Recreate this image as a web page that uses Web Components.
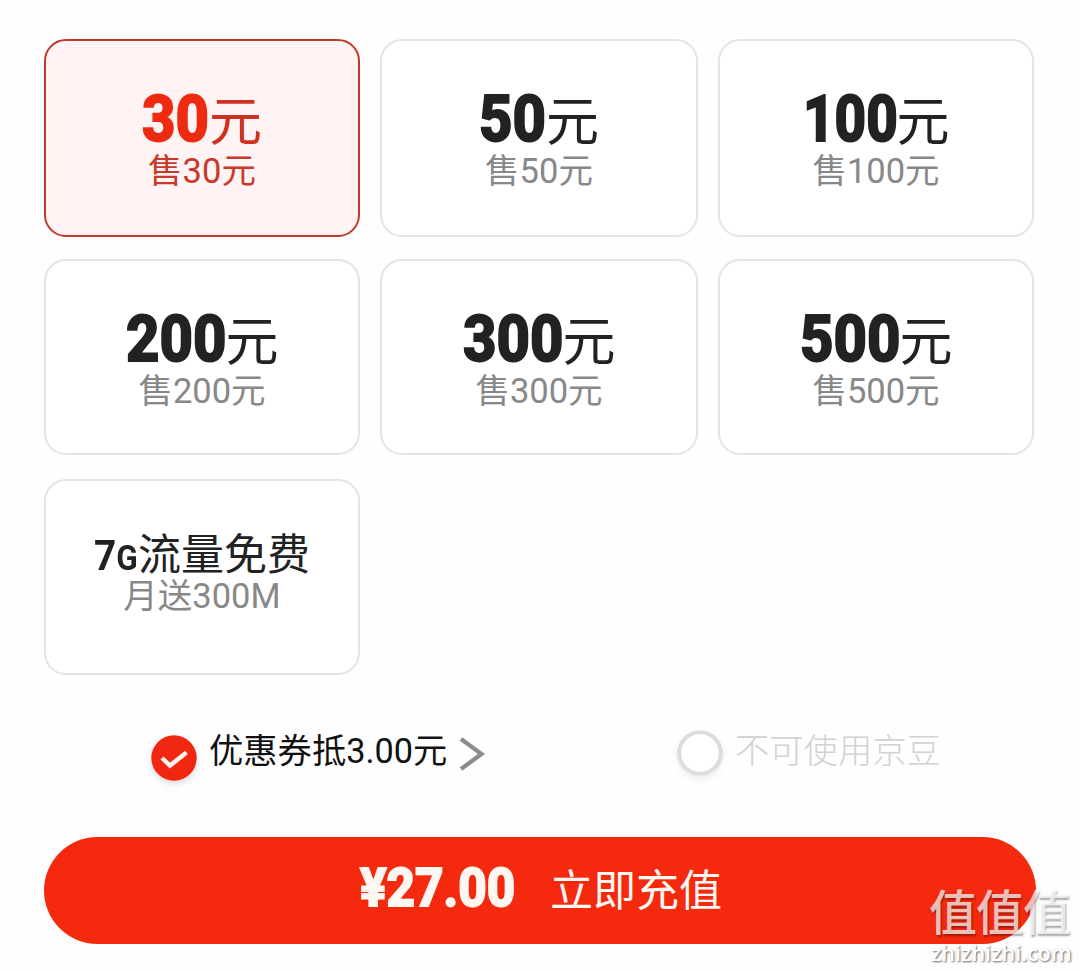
<!DOCTYPE html>
<html lang="zh-CN">
<head>
<meta charset="utf-8">
<title>话费充值</title>
<style>
  body {
    margin: 0;
    background: #fefefe;
    font-family: Roboto, "Noto Sans CJK SC", sans-serif;
  }
</style>
</head>
<body>
<recharge-page></recharge-page>

<script>
/**
 * @class SquashedNumber
 * bold digits drawn narrower than the font has them
 */
class SquashedNumber extends HTMLElement {
  /**
   * @function connectedCallback
   * @returns {void}
   */
  connectedCallback () {
    const root = this.attachShadow({ mode: 'open' });
    root.innerHTML = `
      <style>
        :host { display: inline-block; width: var(--number-width); white-space: nowrap; }
        span {
          display: inline-block;
          transform: scaleX(var(--squash, 0.9));
          transform-origin: 0 50%;
          font-weight: var(--number-weight, 800);
          -webkit-text-stroke: var(--number-stroke, 1.8px) currentColor;
        }
      </style>
      <span><slot></slot></span>`;
    this.style.setProperty('--number-width', this.getAttribute('width') + 'px');
  }
}
customElements.define('squashed-number', SquashedNumber);

/**
 * @class AmountCard
 */
class AmountCard extends HTMLElement {
  /**
   * @function connectedCallback
   * @returns {void}
   */
  connectedCallback () {
    const root = this.attachShadow({ mode: 'open' });
    root.innerHTML = `
      <style>
        :host {
          box-sizing: border-box;
          display: flex;
          flex-direction: column;
          align-items: center;
          height: 196px;
          padding-top: 44px;
          border: 2px solid #e4e4e8;
          border-radius: 22px;
          background: #fff;
          color: #222;
        }
        :host([selected]) {
          height: 198px;
          border-color: #c0392b;
          background: #fff4f3;
          color: #d03020;
          --number-color: #ee2a10;
          --sale-color: #c8392b;
        }
        :host([tall]) { height: 198px; }
        .title {
          display: flex;
          align-items: baseline;
          height: 66px;
          line-height: 68px;
          font-size: 53px;
          white-space: nowrap;
        }
        ::slotted(squashed-number) { font-size: 64.5px; color: var(--number-color, #222); }
        .sale {
          height: 40px;
          line-height: 40px;
          font-size: 34.5px;
          color: var(--sale-color, #888);
          white-space: nowrap;
        }
        :host([plan]) { padding-top: 48px; }
        :host([plan]) .title { height: 47px; line-height: 52px; font-size: 43px; }
      </style>
      <div class="title"><slot></slot></div>
      <div class="sale"><slot name="sale"></slot></div>`;
  }
}
customElements.define('amount-card', AmountCard);

/**
 * @class DiscountOption
 */
class DiscountOption extends HTMLElement {
  /**
   * @function connectedCallback
   * @returns {void}
   */
  connectedCallback () {
    const on = this.hasAttribute('checked');
    const root = this.attachShadow({ mode: 'open' });
    root.innerHTML = `
      <style>
        :host {
          display: flex;
          align-items: flex-start;
          height: 60px;
          font-size: 34.3px;
          line-height: 40px;
          color: #111;
          white-space: nowrap;
        }
        :host([disabled]) { color: #d2d2d2; font-weight: 300; }
        svg { flex: none; display: block; }
        .mark { margin-top: 4px; filter: drop-shadow(0 3px 3px #0002); }
        :host([disabled]) .mark { margin-top: -1px; filter: drop-shadow(0 3px 3px #00000012); }
        .text { margin-left: 12px; }
        .arrow { margin: 6px 0 0 12px; }
      </style>
      ${on
        ? `<svg class="mark" width="46" height="46" viewBox="0 0 46 46">
            <circle cx="23" cy="23" r="22.7" fill="#f1270f"/>
            <path d="M11 23l8 7.5L35.5 17.5" fill="none" stroke="#fff4f0" stroke-width="4.4"/>
          </svg>`
        : `<svg class="mark" width="46" height="46" viewBox="0 0 46 46">
            <circle cx="23" cy="23" r="20.8" fill="#fff" stroke="#dcdcdc" stroke-width="4"/>
          </svg>`}
      <span class="text"><slot></slot></span>
      ${on
        ? `<svg class="arrow" width="26" height="34" viewBox="0 0 26 34">
            <path d="M2 2L22.5 17L2 32" fill="none" stroke="#8c8c8c" stroke-width="4.2"/>
          </svg>`
        : ''}`;
  }
}
customElements.define('discount-option', DiscountOption);

/**
 * @class PayButton
 */
class PayButton extends HTMLElement {
  /**
   * @function connectedCallback
   * @returns {void}
   */
  connectedCallback () {
    const root = this.attachShadow({ mode: 'open' });
    root.innerHTML = `
      <style>
        :host { display: block; }
        button {
          box-sizing: border-box;
          display: flex;
          justify-content: center;
          align-items: baseline;
          gap: 35px;
          width: 992px;
          height: 107px;
          padding: 0 0 0 2px;
          border: 0;
          border-radius: 54px;
          background: #f4290d;
          color: #fff8f2;
          font: 43px/102px Roboto, "Noto Sans CJK SC", sans-serif;
          white-space: nowrap;
        }
        ::slotted(squashed-number) { font-size: 54px; --squash: 0.915; }
      </style>
      <button type="button"><slot name="price"></slot><span><slot></slot></span></button>`;
  }
}
customElements.define('pay-button', PayButton);

/**
 * @class SiteMark
 */
class SiteMark extends HTMLElement {
  /**
   * @function connectedCallback
   * @returns {void}
   */
  connectedCallback () {
    const root = this.attachShadow({ mode: 'open' });
    root.innerHTML = `
      <style>
        :host {
          position: absolute;
          left: 929px;
          top: 886px;
          width: 146px;
          color: #ffffffb8;
          white-space: nowrap;
        }
        .name {
          height: 55px;
          font-size: 48px;
          line-height: 56px;
          letter-spacing: -1px;
          font-weight: 500;
          text-shadow: 1px 2px 2px #0005;
        }
        .site {
          padding-left: 2px;
          font: 600 21.6px/24px "Open Sans", sans-serif;
          color: #fff;
          text-shadow: 1px 1px 2px #0009;
        }
      </style>
      <div class="name">值值值</div>
      <div class="site">zhizhizhi.com</div>`;
  }
}
customElements.define('site-mark', SiteMark);

/**
 * @class RechargePage
 */
class RechargePage extends HTMLElement {
  /**
   * @function connectedCallback
   * @returns {void}
   */
  connectedCallback () {
    const root = this.attachShadow({ mode: 'open' });
    root.innerHTML = `
      <style>
        :host {
          box-sizing: border-box;
          position: relative;
          display: block;
          width: 1080px;
          height: 971px;
          padding: 39px 44px 0;
          overflow: hidden;
        }
        .cards {
          display: grid;
          grid-template-columns: 316px 318px 316px;
          grid-template-rows: 198px 198px 196px;
          gap: 22px 20px;
          align-items: start;
        }
        .options {
          display: grid;
          grid-template-columns: 526px 1fr;
          margin: 56px 0 46px 107px;
        }
        .g { font-size: 35px; }
      </style>
      <div class="cards">
        <amount-card selected><squashed-number width="67">30</squashed-number>元<span slot="sale">售30元</span></amount-card>
        <amount-card tall><squashed-number width="67">50</squashed-number>元<span slot="sale">售50元</span></amount-card>
        <amount-card tall><squashed-number width="94" style="--squash: 0.85">100</squashed-number>元<span slot="sale">售100元</span></amount-card>
        <amount-card><squashed-number width="100">200</squashed-number>元<span slot="sale">售200元</span></amount-card>
        <amount-card><squashed-number width="100">300</squashed-number>元<span slot="sale">售300元</span></amount-card>
        <amount-card><squashed-number width="100">500</squashed-number>元<span slot="sale">售500元</span></amount-card>
        <amount-card plan><squashed-number width="44" style="font-size: 43px; --number-weight: 700; --number-stroke: 0">7<span class="g">G</span></squashed-number>流量免费<span slot="sale">月送300M</span></amount-card>
      </div>
      <div class="options">
        <discount-option checked>优惠券抵3.00元</discount-option>
        <discount-option disabled>不可使用京豆</discount-option>
      </div>
      <pay-button><squashed-number slot="price" width="155">¥27.00</squashed-number>立即充值</pay-button>
      <site-mark></site-mark>`;
  }
}
customElements.define('recharge-page', RechargePage);
</script>
</body>
</html>
